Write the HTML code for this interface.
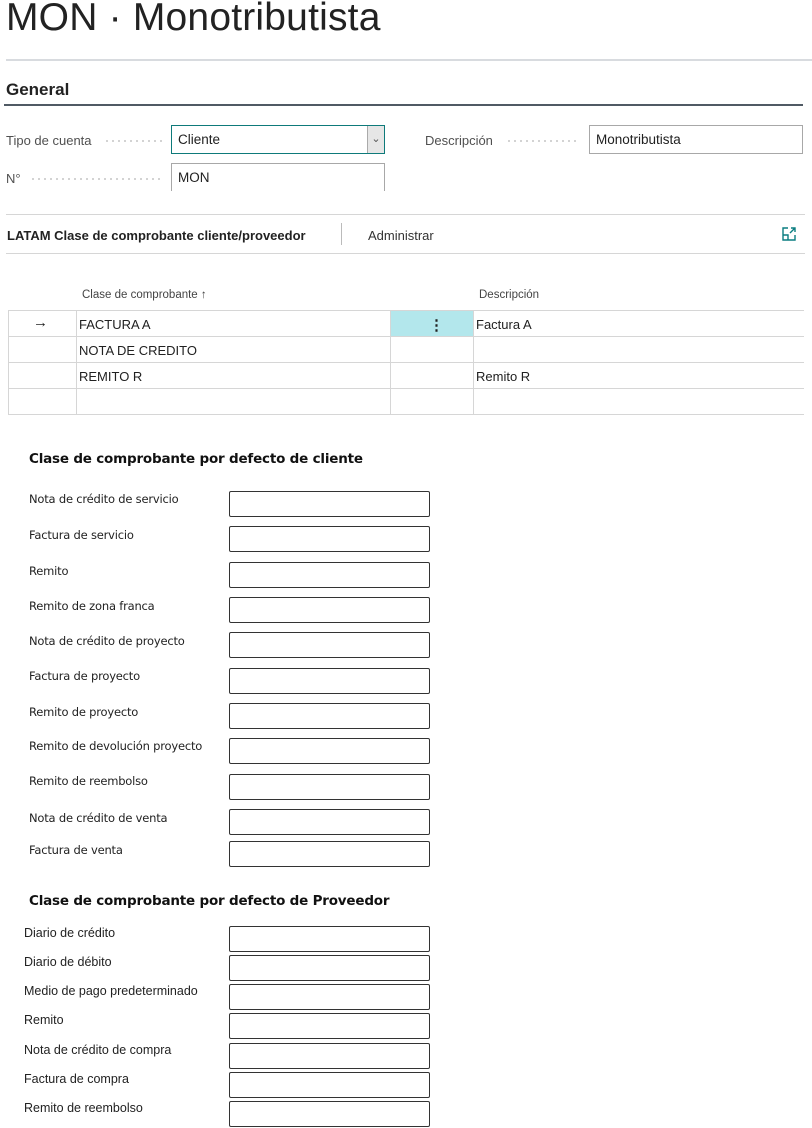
<!DOCTYPE html>
<html><head><meta charset="utf-8"><style>
*{margin:0;padding:0;box-sizing:border-box}
body{width:812px;height:1128px;background:#fff;font-family:"Liberation Sans",sans-serif;color:#212121;position:relative;overflow:hidden}
.a{position:absolute;white-space:nowrap}
.lbl{font-size:13px;color:#505050}
.dots{position:absolute;height:2px;background:radial-gradient(circle,#c4c4c4 0.8px,transparent 1px) 0 0/6px 2px repeat-x}
.in{position:absolute;border:1px solid #a8a8a8;font-size:13.5px;padding:6px 0 0 6px;color:#212121}
.hl{position:absolute;height:1px;background:#d6d6d6}
.vl{position:absolute;width:1px;background:#d6d6d6}
.cell{position:absolute;font-size:13px;color:#212121}
.bx{position:absolute;left:229px;width:201px;height:26px;border:1px solid #333;border-radius:2px}
.cl{position:absolute;left:29px;font-size:11.5px;color:#222;font-family:"DejaVu Sans",sans-serif;letter-spacing:-0.2px}
.vlb{position:absolute;left:24px;font-size:12.5px;color:#222}
.h3{position:absolute;left:29px;font-size:13.5px;font-weight:bold;font-family:"DejaVu Sans",sans-serif;letter-spacing:-0.2px;color:#111}
</style></head><body>
<div class="a" style="left:6px;top:-4px;font-size:39px;color:#222;letter-spacing:0.2px">MON · Monotributista</div>
<div class="hl" style="left:6px;top:59px;width:806px;height:2px;background:#d8dbdf"></div>
<div class="a" style="left:6px;top:80px;font-size:17px;font-weight:bold;color:#222">General</div>
<div class="hl" style="left:4px;top:104px;width:799px;height:2px;background:#505a64"></div>

<div class="a lbl" style="left:6px;top:133px">Tipo de cuenta</div>
<div class="dots" style="left:104px;top:140px;width:58px"></div>
<div class="in" style="left:171px;top:125px;width:214px;height:29px;border-color:#0e7a7a;">Cliente</div>
<div style="position:absolute;left:367px;top:126px;width:17px;height:27px;background:#e6e6e6;border-left:1px solid #aaa;font-size:11px;color:#555;text-align:center;line-height:27px">&#8964;</div>
<div class="a lbl" style="left:6px;top:171px">N°</div>
<div class="dots" style="left:30px;top:178px;width:132px"></div>
<div class="in" style="left:171px;top:163px;width:214px;height:28px;border-bottom:none">MON</div>
<div class="a lbl" style="left:425px;top:133px">Descripción</div>
<div class="dots" style="left:506px;top:140px;width:74px"></div>
<div class="in" style="left:589px;top:125px;width:214px;height:29px">Monotributista</div>

<div class="hl" style="left:6px;top:214px;width:799px"></div>
<div class="a" style="left:7px;top:228px;font-size:13px;font-weight:bold;color:#222">LATAM Clase de comprobante cliente/proveedor</div>
<div class="vl" style="left:341px;top:223px;height:22px;background:#bbb"></div>
<div class="a" style="left:368px;top:228px;font-size:13px;color:#333">Administrar</div>
<svg class="a" style="left:781px;top:226px" width="16" height="16" viewBox="0 0 16 16" fill="none" stroke="#0a7d80" stroke-width="1.4"><path d="M7 2H2v12h12V9M2 9h5v5M9 7l5-5M10 2h4v4"/></svg>
<div class="hl" style="left:6px;top:253px;width:799px"></div>

<div class="a" style="left:82px;top:289px;font-size:11.5px;color:#444">Clase de comprobante ↑</div>
<div class="a" style="left:479px;top:289px;font-size:11.5px;color:#444">Descripción</div>
<div style="position:absolute;left:391px;top:311px;width:82px;height:25px;background:#b3e7ec"></div>
<div class="hl" style="left:8px;top:310px;width:796px"></div>
<div class="hl" style="left:8px;top:336px;width:796px"></div>
<div class="hl" style="left:8px;top:362px;width:796px"></div>
<div class="hl" style="left:8px;top:388px;width:796px"></div>
<div class="hl" style="left:8px;top:414px;width:796px"></div>
<div class="vl" style="left:8px;top:310px;height:105px"></div>
<div class="vl" style="left:76px;top:310px;height:105px"></div>
<div class="vl" style="left:390px;top:310px;height:105px"></div>
<div class="vl" style="left:473px;top:310px;height:105px"></div>
<div class="cell" style="left:33px;top:314px;font-size:15px">→</div>
<div class="cell" style="left:79px;top:317px">FACTURA A</div>
<div class="cell" style="left:429px;top:316px;font-weight:bold;font-size:15px">⋮</div>
<div class="cell" style="left:476px;top:317px">Factura A</div>
<div class="cell" style="left:79px;top:343px">NOTA DE CREDITO</div>
<div class="cell" style="left:79px;top:369px">REMITO R</div>
<div class="cell" style="left:476px;top:369px">Remito R</div>

<div class="h3" style="top:451px">Clase de comprobante por defecto de cliente</div>
<div class="cl" style="top:492px">Nota de crédito de servicio</div><div class="bx" style="top:491px"></div>
<div class="cl" style="top:528px">Factura de servicio</div><div class="bx" style="top:526px"></div>
<div class="cl" style="top:564px">Remito</div><div class="bx" style="top:562px"></div>
<div class="cl" style="top:599px">Remito de zona franca</div><div class="bx" style="top:597px"></div>
<div class="cl" style="top:634px">Nota de crédito de proyecto</div><div class="bx" style="top:632px"></div>
<div class="cl" style="top:669px">Factura de proyecto</div><div class="bx" style="top:668px"></div>
<div class="cl" style="top:705px">Remito de proyecto</div><div class="bx" style="top:703px"></div>
<div class="cl" style="top:739px">Remito de devolución proyecto</div><div class="bx" style="top:738px"></div>
<div class="cl" style="top:774px">Remito de reembolso</div><div class="bx" style="top:774px"></div>
<div class="cl" style="top:811px">Nota de crédito de venta</div><div class="bx" style="top:809px"></div>
<div class="cl" style="top:843px">Factura de venta</div><div class="bx" style="top:841px"></div>

<div class="h3" style="top:893px">Clase de comprobante por defecto de Proveedor</div>
<div class="vlb" style="top:926px">Diario de crédito</div><div class="bx" style="top:926px"></div>
<div class="vlb" style="top:955px">Diario de débito</div><div class="bx" style="top:955px"></div>
<div class="vlb" style="top:984px">Medio de pago predeterminado</div><div class="bx" style="top:984px"></div>
<div class="vlb" style="top:1013px">Remito</div><div class="bx" style="top:1013px"></div>
<div class="vlb" style="top:1043px">Nota de crédito de compra</div><div class="bx" style="top:1043px"></div>
<div class="vlb" style="top:1072px">Factura de compra</div><div class="bx" style="top:1072px"></div>
<div class="vlb" style="top:1101px">Remito de reembolso</div><div class="bx" style="top:1101px"></div>
</body></html>
